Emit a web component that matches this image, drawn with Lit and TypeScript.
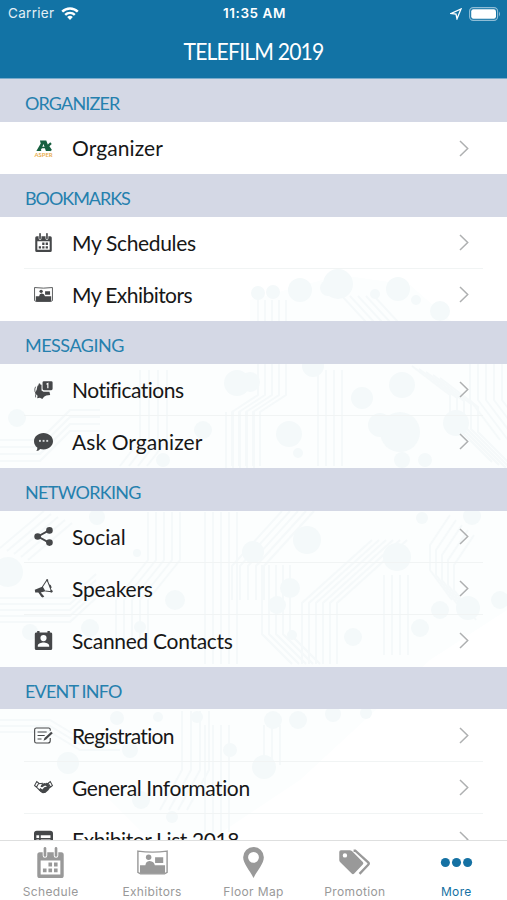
import { LitElement, html, svg, css } from "lit";
import { customElement, property } from "lit/decorators.js";
import { styleMap } from "lit/directives/style-map.js";

type Row = { icon: string; label: string; track: number };
type Section = { title: string; track: number; rows: Row[] };

const SECTIONS: Section[] = [
  { title: "ORGANIZER", track: -0.85, rows: [{ icon: "logo", label: "Organizer", track: 0.1 }] },
  {
    title: "BOOKMARKS", track: -1.05, rows: [
      { icon: "calendar", label: "My Schedules", track: -0.33 },
      { icon: "booth", label: "My Exhibitors", track: -0.55 },
    ],
  },
  {
    title: "MESSAGING", track: -0.5, rows: [
      { icon: "bell", label: "Notifications", track: -0.5 },
      { icon: "chat", label: "Ask Organizer", track: 0.07 },
    ],
  },
  {
    title: "NETWORKING", track: -0.7, rows: [
      { icon: "share", label: "Social", track: 0 },
      { icon: "horn", label: "Speakers", track: -0.2 },
      { icon: "contact", label: "Scanned Contacts", track: -0.3 },
    ],
  },
  {
    title: "EVENT INFO", track: -0.8, rows: [
      { icon: "form", label: "Registration", track: -0.7 },
      { icon: "hands", label: "General Information", track: -0.38 },
      { icon: "list", label: "Exhibitor List 2018", track: -0.4 },
    ],
  },
];

const TABS = [
  { icon: "calendar", label: "Schedule" },
  { icon: "booth", label: "Exhibitors" },
  { icon: "pin", label: "Floor Map" },
  { icon: "tags", label: "Promotion" },
  { icon: "dots", label: "More" },
];

const ICONS: Record<string, unknown> = {
  logo: svg`
    <path fill="#17603f" fill-rule="evenodd" d="M7.500 3h8l5 13.500h-5.500L13.800 13H10l-1.500 2 1 1.500H3L8.500 7zM12 7.500L10.500 11h2.800z"/>
    <path fill="none" stroke="#17603f" stroke-width="2.800" d="M16 11.500l5.500-5M17.500 10l4 6"/>
    <text x="12" y="23.500" text-anchor="middle" textLength="23" font-family="Lato, sans-serif" font-size="7.500" font-weight="700" fill="#e9ad4e">ASPER</text>`,
  calendar: svg`
    <path fill-rule="evenodd" d="M3 4h2.500v2.500a1.900 1.900 0 0 0 3.800 0V4h5.400v2.500a1.900 1.900 0 0 0 3.800 0V4H21a2 2 0 0 1 2 2v16a2 2 0 0 1-2 2H3a2 2 0 0 1-2-2V6a2 2 0 0 1 2-2zm.8 6.500v10.700h16.400V10.500z"/>
    <rect x="6.300" y="0" width="2.200" height="7.600" rx="1.100"/><rect x="15.500" y="0" width="2.200" height="7.600" rx="1.100"/>
    <path d="M10.300 12h3v3h-3zm4.600 0h3v3h-3zM5.700 16.600h3v3h-3zm4.600 0h3v3h-3zm4.600 0h3v3h-3z"/>`,
  booth: svg`
    <path fill="none" stroke="currentColor" stroke-width="1.100" d="M.7 3.200q11.300 1.500 22.600 0v16.500l-2 1.100H2.700l-2-1.100z"/>
    <path d="M2.300 14.200h4.200q.2-3 3-3.400h.3q3.600.4 4 3.400h7.900V20l-1 .8H3.300l-1-.8zM14 8h6.300v4.300H14z"/>
    <circle cx="9" cy="8" r="2.100"/>`,
  bell: svg`
    <path d="M12.500 1.500h9.300A1.700 1.700 0 0 1 23.500 3.200v8a1.700 1.700 0 0 1-1.700 1.700h-9.300a1.700 1.700 0 0 1-1.700-1.700v-8a1.700 1.700 0 0 1 1.700-1.700z"/>
    <path fill="none" stroke="#fff" stroke-width="1.500" d="M15.700 5.500l1.800-1v6"/>
    <path d="M5.500 5l2-.8.8 1.900 1.200-.2v7.300l2.500 1.600h7.500l1 4-5 .7-2.800 1.600-2.200 2.900-3-1.500-3.500.5.500-3L1 16.500q3-4 3-7.500 0-2 2-2.800z"/>
    <path fill="none" stroke="currentColor" stroke-width="1" d="M1.200 15q-.8-4 .8-6.500M2 18v4"/>`,
  chat: svg`
    <path d="M12 1.200c6.700 0 12 4.600 12 10.400s-5.300 10.400-12 10.400c-1.500 0-3-.2-4.300-.6-1 1.500-2.500 2.300-4.700 2.600 1-1.300 1.400-2.700 1.200-4.300C1.500 17.800 0 14.900 0 11.600 0 5.800 5.300 1.200 12 1.200z"/>
    <g fill="#d5d8d8"><rect x="6.300" y="10" width="2.400" height="2.400"/><rect x="10.900" y="10" width="2.400" height="2.400"/><rect x="15.500" y="10" width="2.400" height="2.400"/></g>`,
  share: svg`
    <path fill="none" stroke="currentColor" stroke-width="2.400" d="M19.500 4L5 12l14.500 8"/>
    <circle cx="19.500" cy="4.300" r="4.200"/><circle cx="4.600" cy="12" r="4.200"/><circle cx="19.500" cy="19.700" r="4.200"/>`,
  horn: svg`
    <path d="M1 13.500l10-4 3.500 6-6 1.500 4.500 5-2 1.300-1.800-.8L5.500 17 1.500 17z"/>
    <path fill="none" stroke="currentColor" stroke-width="1.300" stroke-linejoin="round" d="M10.500 10L16.500 1l5.800 15-8-.8M18.500 7.300q3 .2 3 4"/>
    <circle cx="16.700" cy="1.700" r="1.300"/><circle cx="22" cy="15.500" r="1.500"/>`,
  contact: svg`
    <path fill-rule="evenodd" d="M4 2V0h3v2h10V0h3v2h1.500A1.800 1.800 0 0 1 23 4v18a2 2 0 0 1-2 2H3a2 2 0 0 1-2-2V4a2 2 0 0 1 1.500-2zM12 5a3.900 3.900 0 1 0 0 7.800A3.900 3.900 0 0 0 12 5zM4.800 20h14.400v-1.300c0-2.800-4.600-4.200-7.200-4.200s-7.200 1.400-7.200 4.200z"/>`,
  form: svg`
    <path fill="none" stroke="currentColor" stroke-width="1.400" d="M20.500 6V4.500q0-2-2-2H3Q.8 2.500.8 4.700v14.600q0 2.200 2.200 2.200h14.500q3 0 3-3V15M4.500 7.500H16M4.500 12h9M4.500 16.500h5"/>
    <path d="M21.700 7.200l2 1.800-8.400 8.200-3.300 1.300 1.200-3.300z"/>`,
  hands: svg`
    <path fill="none" stroke="currentColor" stroke-width="1.300" d="M3.500 4.500L.7 9.500l2.500 2L6 6.500zM20.500 4.500l2.800 5-2.500 2L18 6.500zM5.800 7.200l5.700-.7M18 7.200l-3-.7M3.500 11.800l5 5.200 3.500 2"/>
    <path d="M9.500 8.200L13 6.300l5.200 1.400 2.300 4.300-2.300 3.500-4 3.500h-3.500L6 15.200l2-2.500 2.500 1.800 2.500-2.800 3.500-1L14 9.500l-3.800 2.200-2-.5z"/>`,
  list: svg`
    <path fill-rule="evenodd" d="M3.500 1h17A3.500 3.500 0 0 1 24 4.500v15a3.500 3.500 0 0 1-3.500 3.500h-17A3.500 3.500 0 0 1 0 19.500v-15A3.500 3.500 0 0 1 3.500 1zM3 6.500v3.700h3.500V6.500zm5.500 0v3.700h12.300V6.500zM3 12v3h3.500v-3zm5.500 0v3h12.300v-3zM3 17v3h3.500v-3zm5.500 0v3h12.300v-3z"/>`,
  pin: svg`<path fill-rule="evenodd" d="M12 0a8 8 0 0 1 8 8c0 5-5 10-8 16-3-6-8-11-8-16a8 8 0 0 1 8-8zm0 3.800a4.200 4.200 0 1 0 0 8.400 4.200 4.200 0 0 0 0-8.400z"/>`,
  tags: svg`
    <path fill-rule="evenodd" d="M.2 3.800q0-1.300 1.300-1.300h6.800q1 0 1.900.8l8.200 8.300q1 1 0 2l-6.600 7q-1 1-2 0L1 11.800q-.8-.8-.8-1.800zm4.400 1a1.700 1.700 0 1 0 0 3.400 1.700 1.700 0 0 0 0-3.400z"/>
    <path fill="none" stroke="currentColor" stroke-width="1.800" d="M11.300 2.900h1.300l10 9q.9.900 0 1.800l-6.700 7.100"/>`,
  dots: svg`<circle cx="3.400" cy="12" r="3.500"/><circle cx="12" cy="12" r="3.500"/><circle cx="20.600" cy="12" r="3.500"/>`,
};

const icon = (name: string) =>
  html`<svg class="icon ${name}" viewBox="0 0 24 24" fill="currentColor">${ICONS[name]}</svg>`;

const NODES: [number, number, number][] = [
  [258, 293, 7], [273, 292, 7], [300, 290, 12], [338, 284, 15], [328, 288, 8], [398, 289, 12], [375, 294, 5],
  [416, 300, 5], [440, 311, 10], [313, 366, 11], [402, 385, 13], [362, 398, 11], [289, 434, 13], [400, 432, 20],
  [380, 425, 12], [456, 423, 13], [425, 460, 7], [402, 460, 8], [298, 453, 5], [250, 382, 10],
  [307, 540, 14], [397, 557, 14], [290, 588, 10], [277, 605, 9], [468, 608, 12], [440, 610, 9], [253, 552, 11],
  [353, 637, 9], [420, 628, 9], [292, 635, 5], [422, 518, 6], [472, 516, 9], [500, 600, 9],
  [237, 383, 13], [17, 418, 9], [203, 430, 9], [163, 460, 7], [8, 572, 15], [97, 517, 8], [137, 553, 4],
  [175, 600, 10], [30, 632, 8], [90, 628, 9], [140, 627, 6], [68, 763, 11], [117, 718, 7], [130, 750, 8],
  [158, 717, 5], [141, 800, 9], [172, 817, 6], [230, 750, 7], [197, 717, 6], [273, 720, 9], [298, 720, 9],
  [333, 714, 8], [366, 713, 6], [264, 767, 12],
];

// Parallel circuit traces: [count, dx, dy, path]
const TRACES: [number, number, number, string][] = [
  [5, 7, 0, "M258 300V395L232 412V466"],
  [4, 8, 0, "M318 370V466"],
  [5, 8, 0, "M342 296L366 322"],
  [4, 9, 0, "M140 370V440L120 466"],
  [5, 7, 0, "M226 412V468"],
  [4, 0, 7, "M0 440H40L70 410H100"],
  [5, 7, 3, "M412 366L450 395V420L492 462"],
  [5, 8, 0, "M470 364V400L500 440"],
  [6, 7, 0, "M372 540L302 603V664"],
  [5, 8, 0, "M282 511L232 566V600"],
  [5, 6, 5, "M450 515L430 545V570L452 600"],
  [5, 7, 0, "M262 565V634L292 664"],
  [5, 8, 0, "M148 512V560L116 600V640"],
  [5, 8, 0, "M205 512V664"],
  [5, 0, 6, "M0 598H70L96 574"],
  [5, 7, 3, "M0 548L44 511"],
  [4, 8, 0, "M384 575V655"],
  [4, 9, 0, "M182 711V770L160 810"],
  [4, 8, 0, "M205 725V832"],
  [3, 8, 0, "M264 725V765"],
  [3, 0, 6, "M0 720H50L80 738H120"],
];

@customElement("circuit-art")
class CircuitArt extends LitElement {
  static styles = css`
    :host { display: block; }
    .art { display: block; width: 507px; height: 900px; }
    .wash { fill: #fcfefe; }
    .traces { fill: none; stroke: #f5f9fa; stroke-width: 2; }
    .nodes { fill: #f4f9fa; }
  `;
  render() {
    return html`<svg class="art" viewBox="0 0 507 900">
      <path class="wash" d="M0 364H250V300L340 275 410 285 450 320 507 364V610L430 660 300 780 210 840H150L90 780H0z" />
      <g class="traces">
        ${TRACES.flatMap(([n, dx, dy, d]) =>
          Array.from({ length: n }, (_, i) => svg`<path d=${d} transform="translate(${i * dx} ${i * dy})"/>`))}
      </g>
      <g class="nodes">${NODES.map(([x, y, r]) => svg`<circle cx=${x} cy=${y} r=${r} />`)}</g>
    </svg>`;
  }
}

@customElement("menu-section")
class MenuSection extends LitElement {
  @property({ attribute: false }) section!: Section;
  static styles = css`
    :host { display: block; font-variant-ligatures: none; }
    .head {
      box-sizing: border-box; height: 42.7px; padding: 5px 25px 0; display: flex; align-items: center;
      background: #d4d8e5; color: #2580ae; font-size: 18px; line-height: 24px;
    }
    .rows { padding: 0 24px; }
    .row { box-sizing: border-box; height: 52.1px; display: flex; align-items: center; border-bottom: 1px solid #f1f4f4; }
    .row:last-child { border-bottom-color: transparent; }
    .slot { width: 39px; height: 20px; margin-right: 9px; display: flex; align-items: center; justify-content: center; color: #454749; }
    .icon { width: 19px; height: 19px; overflow: visible; }
    .calendar { transform: scaleX(.95); }
    .label { flex: 1; color: #171717; font-size: 21px; line-height: 28px; white-space: nowrap; padding-top: 1px; }
    .chevron { width: 10px; height: 17px; margin: 1px 14px 0 0; fill: none; stroke: #aeb0b1; stroke-width: 1.500; }
  `;
  render() {
    const s = this.section;
    return html`
      <div class="head"><span style=${styleMap({ letterSpacing: `${s.track}px` })}>${s.title}</span></div>
      <div class="rows">
        ${s.rows.map((r) => html`<div class="row">
          <span class="slot">${icon(r.icon)}</span>
          <span class="label"><span style=${styleMap({ letterSpacing: `${r.track}px` })}>${r.label}</span></span>
          <svg class="chevron" viewBox="0 0 10 17"><path d="M1 1l7.700 7.500L1 16" /></svg>
        </div>`)}
      </div>`;
  }
}

@customElement("app-root")
class AppRoot extends LitElement {
  static styles = css`
    :host {
      display: flex; flex-direction: column; position: relative; width: 507px; height: 900px; overflow: hidden;
      background: #fff; font-family: Lato, "Open Sans", sans-serif;
    }
    .top { box-sizing: border-box; height: 79.3px; flex: none; background: #1273a5; color: #fff; border-bottom: 1px solid #79abcb; }
    .status {
      height: 27px; padding: 0 6px 0 8px; display: grid; grid-template-columns: 1fr auto 1fr; align-items: center;
      font: 13.500px/27px Inter, "Liberation Sans", sans-serif;
    }
    .carrier { display: flex; align-items: center; gap: 7px; letter-spacing: .3px; color: #e2eff5; }
    .wifi { width: 18px; height: 13px; }
    .time { font-weight: 600; letter-spacing: .55px; }
    .power { display: flex; align-items: center; justify-content: flex-end; gap: 7px; }
    .arrow { width: 12px; height: 12px; }
    .battery { width: 32px; height: 14px; }
    .title { text-align: center; font-size: 23px; line-height: 49px; letter-spacing: -.9px; transform: scaleX(.92); }
    .content { flex: 1; min-height: 0; overflow: hidden; }
    .art { position: absolute; left: 0; top: 0; }
    menu-section { position: relative; }
    .tabs {
      box-sizing: border-box; position: relative; height: 60px; flex: none; display: grid; grid-template-columns: repeat(5, 1fr);
      background: #fff; border-top: 1px solid #dedfdf;
    }
    .tab {
      display: flex; flex-direction: column; align-items: center; padding-top: 6px; color: #999;
      font: 12px/16px Inter, "Liberation Sans", sans-serif; letter-spacing: .35px;
    }
    .tab:last-child { color: #1571a3; }
    .icon { width: 31px; height: 31px; margin-bottom: 6px; overflow: visible; }
    .calendar { transform: scaleX(.93); }
  `;
  render() {
    return html`
      <div class="art"><circuit-art></circuit-art></div>
      <header class="top">
        <div class="status">
          <span class="carrier">Carrier
            <svg class="wifi" viewBox="0 0 18 13" fill="none" stroke="#fff" stroke-width="2.400">
              <path d="M1.200 4.700a11 11 0 0 1 15.600 0M4.200 7.900a6.800 6.800 0 0 1 9.600 0" />
              <path stroke="none" fill="#fff" d="M6.200 10.100a4 4 0 0 1 5.600 0L9 13z" />
            </svg></span>
          <span class="time">11:35 AM</span>
          <span class="power">
            <svg class="arrow" viewBox="0 0 12 12" fill="none" stroke="#fff" stroke-width="1.300"><path d="M11 1L7 10.800 6 6.200 1.200 5.500z" /></svg>
            <svg class="battery" viewBox="0 0 32 14">
              <rect x=".6" y=".6" width="28" height="12.800" rx="3.600" fill="none" stroke="#8fbdd6" stroke-width="1.100" />
              <rect x="2.200" y="2.200" width="24.800" height="9.600" rx="2.200" fill="#fff" />
              <path d="M30 4.500q2 2.500 0 5z" fill="#8fbdd6" />
            </svg>
          </span>
        </div>
        <div class="title">TELEFILM 2019</div>
      </header>
      <main class="content">${SECTIONS.map((s) => html`<menu-section .section=${s}></menu-section>`)}</main>
      <nav class="tabs">${TABS.map((t) => html`<div class="tab">${icon(t.icon)}<span>${t.label}</span></div>`)}</nav>`;
  }
}
